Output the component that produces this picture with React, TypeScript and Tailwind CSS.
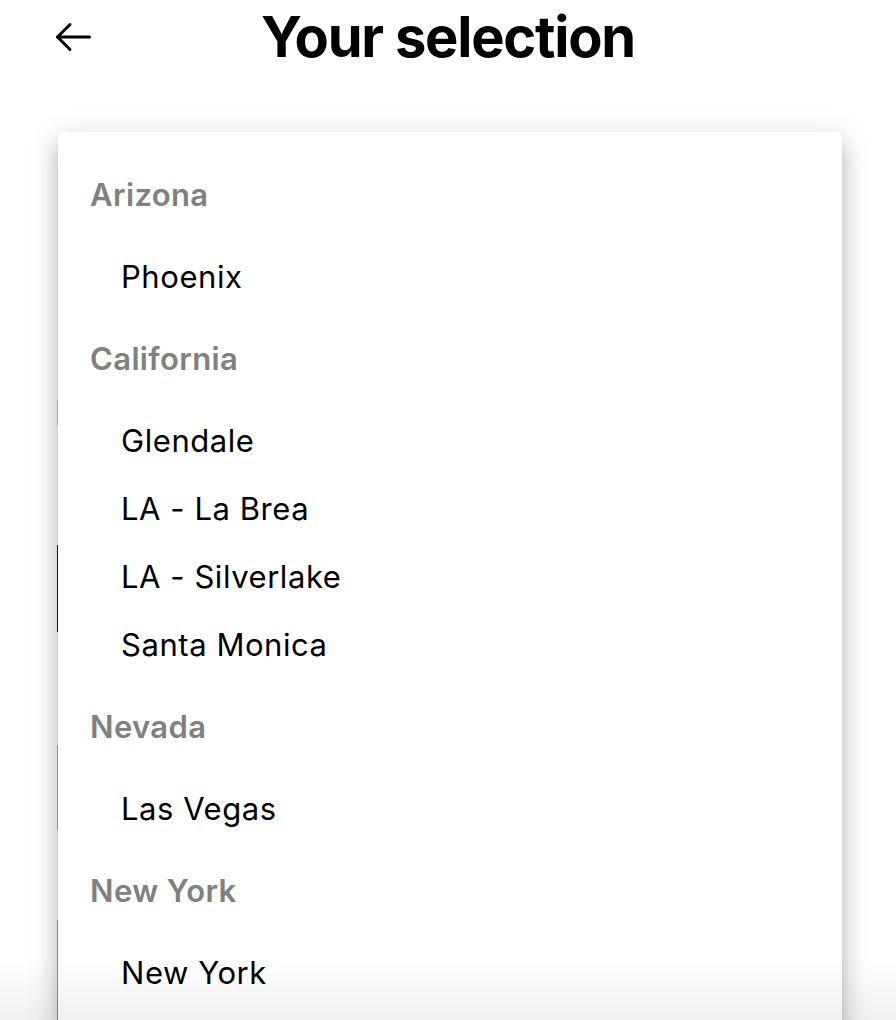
import React from "react";

const groups: { state: string; cities: string[] }[] = [
  { state: "Arizona", cities: ["Phoenix"] },
  { state: "California", cities: ["Glendale", "LA - La Brea", "LA - Silverlake", "Santa Monica"] },
  { state: "Nevada", cities: ["Las Vegas"] },
  { state: "New York", cities: ["New York"] },
];

export default function App() {
  return (
    <div
      className="relative h-[1020px] w-[896px] overflow-hidden bg-white text-black"
      style={{ fontFamily: "Inter, 'Noto Sans', sans-serif" }}
    >
      <header className="grid h-[74px] grid-cols-[1fr_auto_1fr] items-center">
        <div className="pl-[54px]">
          <svg width="40" height="32" viewBox="0 0 40 32" fill="none" stroke="#000" strokeWidth="3" strokeLinecap="round" strokeLinejoin="round">
            <path d="M16 3.5 3.5 16 16 28.5" />
            <path d="M3.5 16H35.5" />
          </svg>
        </div>
        <h1 className="text-[56px] font-bold leading-none tracking-[-0.022em]">Your selection</h1>
        <div />
      </header>

      <div className="mt-[58px] ml-[57px] flex">
        {/* edges of the page content peeking out behind the menu */}
        <div className="flex w-px flex-col">
          <div className="h-[268px]" />
          <div className="h-[25px] bg-[#e4b4dc]" />
          <div className="h-[120px]" />
          <div className="h-[87px] bg-[#1a1a1a]" />
          <div className="h-[113px]" />
          <div className="h-[85px] bg-[#b5b5b5]" />
          <div className="h-[90px]" />
          <div className="h-[120px] bg-[#cf86c3]" />
        </div>
        <div className="h-[900px] w-[784px] rounded-[5px] bg-white pt-[15px] shadow-[0_10px_10px_-6px_rgba(0,0,0,0.2),0_16px_20px_2px_rgba(0,0,0,0.14),0_6px_28px_4px_rgba(0,0,0,0.12)]">
          {groups.map((g) => (
            <div key={g.state} className="flex flex-col">
              <div className="flex h-[96px] items-center pl-[32px] text-[31px] font-semibold tracking-[0.012em] text-[#808080]">
                {g.state}
              </div>
              {g.cities.map((c) => (
                <div key={c} className="flex h-[68px] items-center pl-[63px] text-[31px] font-normal tracking-[0.018em] text-black">
                  {c}
                </div>
              ))}
            </div>
          ))}
        </div>
      </div>

      <div className="pointer-events-none absolute inset-x-0 bottom-0 h-[62px] bg-gradient-to-b from-transparent to-black/[0.06]" />
    </div>
  );
}
